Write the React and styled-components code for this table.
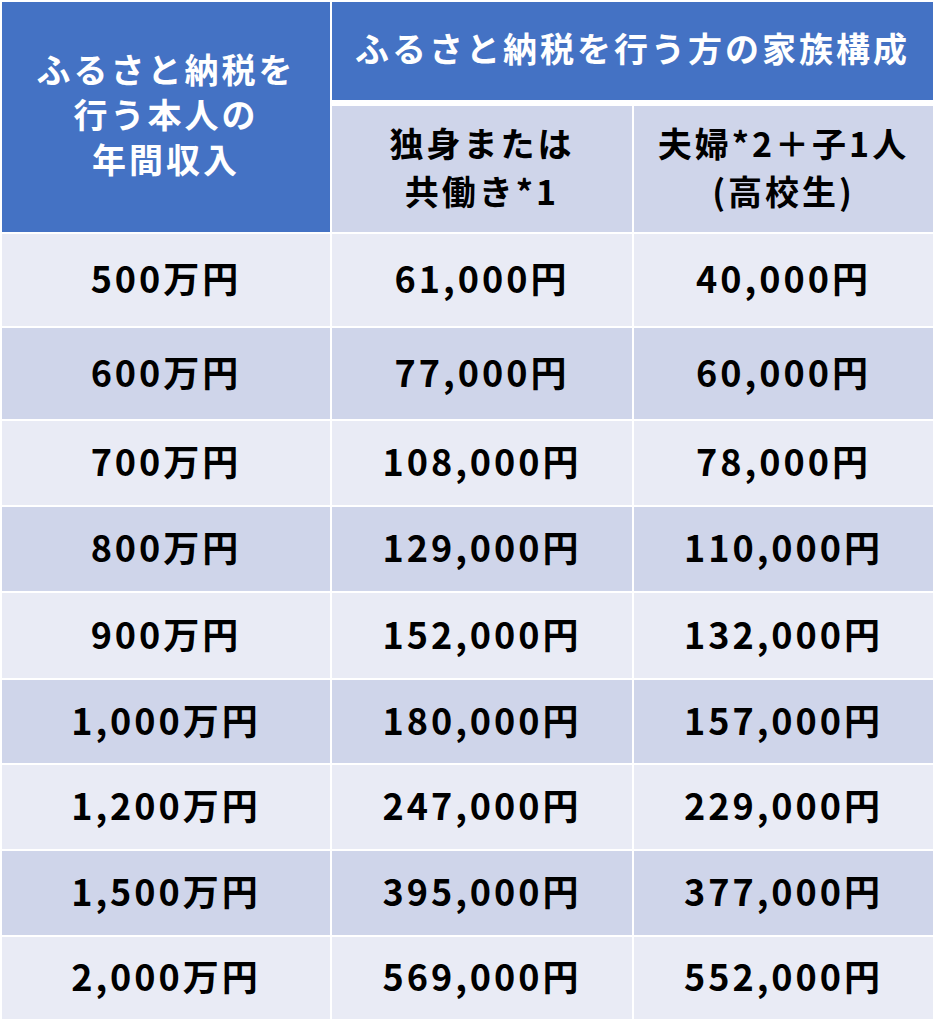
import React from 'react'
import styled, { createGlobalStyle } from 'styled-components'

const rows = [
    ['500万円', '61,000円', '40,000円'],
    ['600万円', '77,000円', '60,000円'],
    ['700万円', '108,000円', '78,000円'],
    ['800万円', '129,000円', '110,000円'],
    ['900万円', '152,000円', '132,000円'],
    ['1,000万円', '180,000円', '157,000円'],
    ['1,200万円', '247,000円', '229,000円'],
    ['1,500万円', '395,000円', '377,000円'],
    ['2,000万円', '569,000円', '552,000円'],
]

function App() {
    return (
        <>
            <GlobalStyle />
            <Table>
                <HeadCell $span="rows">
                    ふるさと納税を<br />行う本人の<br />年間収入
                </HeadCell>
                <HeadCell $span="cols">ふるさと納税を行う方の家族構成</HeadCell>
                <SubHeadCell>
                    独身または<br />共働き*1
                </SubHeadCell>
                <SubHeadCell>
                    夫婦*2＋子1人<br />(高校生)
                </SubHeadCell>
                {rows.map((row, i) =>
                    row.map((value, j) => (
                        <DataCell key={i + '-' + j} $dark={i % 2 === 1}>
                            {value}
                        </DataCell>
                    ))
                )}
            </Table>
        </>
    )
}

const GlobalStyle = createGlobalStyle`
    body {
        margin: 0;
        background: #ffffff;
        font-family: "Noto Sans CJK JP", "Noto Sans", sans-serif;
    }
`

const Table = styled.div`
    display: grid;
    grid-template-columns: 328px 300px 299px;
    grid-template-rows: 98px 130px 92px 91px 84px 84px 85px 83px 84px 84px 82px;
    gap: 2px;
    margin: 2px 0 0 2px;
    width: 933px;
`

const Cell = styled.div`
    display: flex;
    align-items: center;
    justify-content: center;
    text-align: center;
    font-weight: 700;
    letter-spacing: 3px;
`

const HeadCell = styled(Cell)`
    background: #4472c4;
    color: #ffffff;
    font-size: 34px;
    line-height: 45px;
    grid-row: ${(p) => (p.$span === 'rows' ? 'span 2' : 'auto')};
    grid-column: ${(p) => (p.$span === 'cols' ? 'span 2' : 'auto')};
    padding-bottom: ${(p) => (p.$span === 'rows' ? '8px' : '8px')};
`

const SubHeadCell = styled(Cell)`
    background: #cfd5ea;
    color: #000000;
    font-size: 34px;
    line-height: 48px;
    margin-top: 4px;
    padding-bottom: 4px;
`

const DataCell = styled(Cell)`
    background: ${(p) => (p.$dark ? '#cfd5ea' : '#e9ebf5')};
    color: #000000;
    font-size: 36px;
    padding-bottom: 6px;
`

export default App
